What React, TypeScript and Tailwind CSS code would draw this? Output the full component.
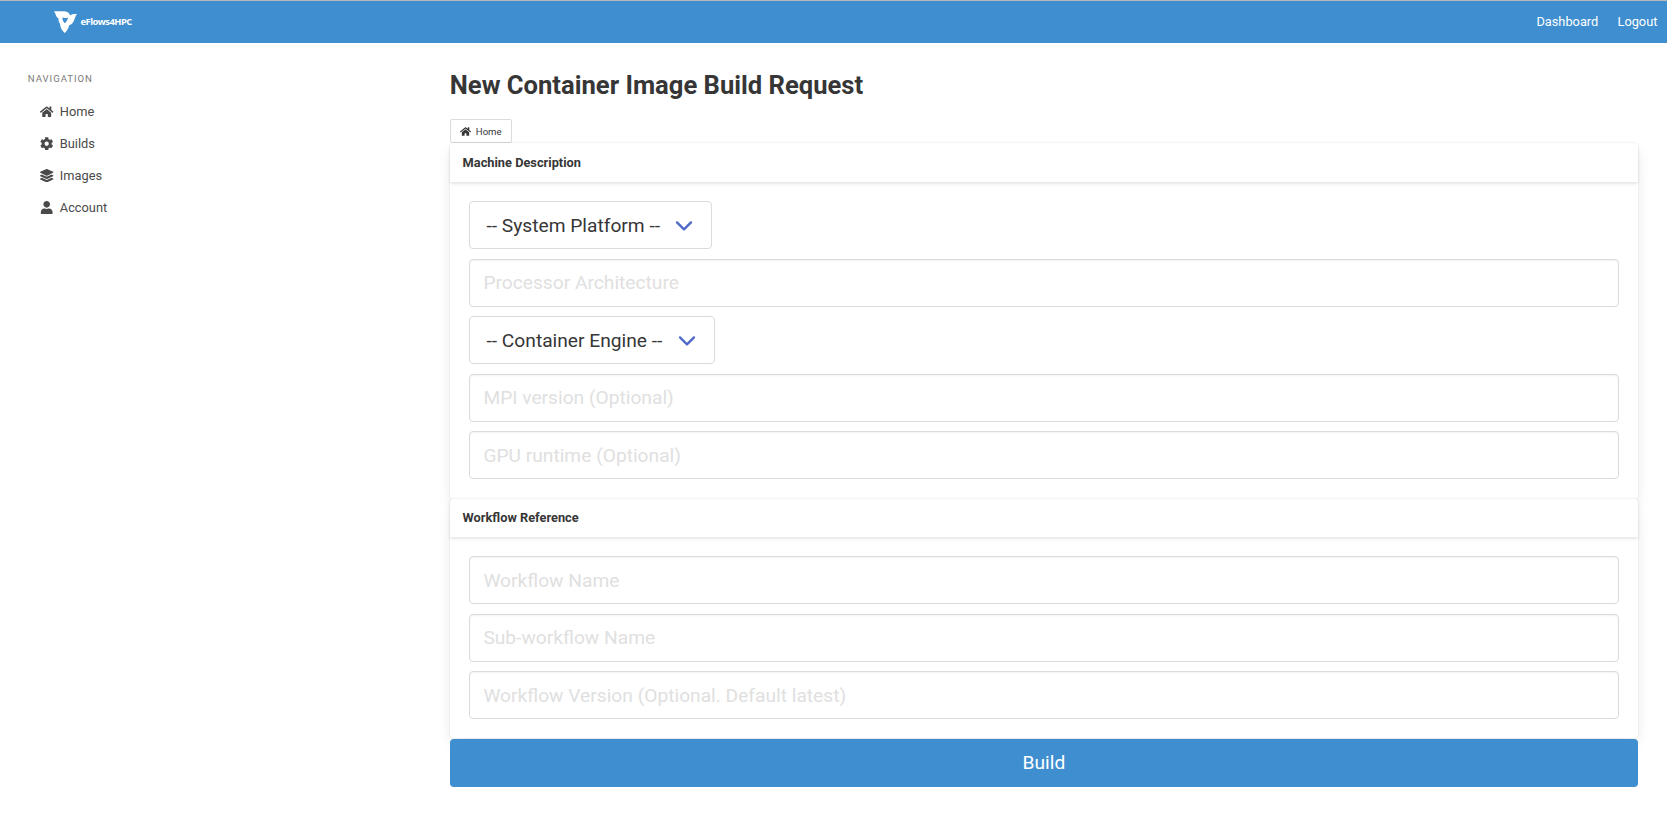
import { FaCog, FaHome, FaLayerGroup, FaUser } from "react-icons/fa";
import type { IconType } from "react-icons";

const menu: { label: string; Icon: IconType }[] = [
  { label: "Home", Icon: FaHome },
  { label: "Builds", Icon: FaCog },
  { label: "Images", Icon: FaLayerGroup },
  { label: "Account", Icon: FaUser },
];

function Logo() {
  return (
    <a href="#" className="flex items-center">
      <svg className="h-[22px] w-6 fill-white" viewBox="0 0 24 22">
        <path
          fillRule="evenodd"
          d="M0 .2H9.6C12.8 .2 15.2 1.6 16.2 4.4C18 2.8 20 2.8 23.2 3C22 4 21.6 5.4 20.8 7.4C19.4 11.4 17.8 13.6 15.2 14.2C14.6 17.2 12.8 20 10.7 22C8 19.6 6.2 17 6 12.8C4.8 11 4.2 9.4 4.6 7.6C2 6.4 1.8 2.4 0 .2ZM8.4 6.6C8.2 8.6 9 10.6 10.8 12.2C11.8 11.6 13.4 9 14.2 6.4C12.4 7.2 10.4 7.2 8.4 6.6Z"
        />
      </svg>
      <span className="ml-[2.5px] font-['Open_Sans',sans-serif] text-[9.4px] leading-3 font-bold tracking-[-0.52px] text-white">
        eFlows4HPC
      </span>
    </a>
  );
}

function TextField({ placeholder }: { placeholder: string }) {
  return (
    <input
      type="text"
      placeholder={placeholder}
      className="block h-12 w-full rounded border border-[#dbdbdb] px-[13.4px] text-[19.2px] leading-[28.8px] text-[#363636] shadow-[inset_0_1px_2px_rgba(10,10,10,0.05)] outline-none placeholder:text-[#e0e0e0]"
    />
  );
}

function Select({ label, width }: { label: string; width: string }) {
  return (
    <button
      type="button"
      className={`flex h-12 items-center justify-between rounded border border-[#dbdbdb] bg-white pt-[2.4px] pr-[17.4px] pl-[16.5px] text-[19.2px] leading-[28.8px] text-[#363636] ${width}`}
    >
      {label}
      <svg className="h-3 w-[18px]" viewBox="0 0 18 12" fill="none">
        <path d="M2 2.4L9 9.4L16 2.4" stroke="#5068ca" strokeWidth="2.3" strokeLinecap="round" strokeLinejoin="round" />
      </svg>
    </button>
  );
}

function Card({ title, children }: { title: string; children: React.ReactNode }) {
  return (
    <section className="rounded bg-white shadow-[0_6.4px_12.8px_-1.6px_rgba(10,10,10,0.1),0_0_0_1px_rgba(10,10,10,0.02)]">
      <header className="rounded-t px-[12.8px] py-[9.6px] text-[12.8px] leading-[19.2px] font-bold text-[#363636] shadow-[0_1.3px_3.2px_rgba(10,10,10,0.1)]">
        {title}
      </header>
      <div className="flex flex-col gap-[9.6px] p-[19.2px]">{children}</div>
    </section>
  );
}

export default function App() {
  return (
    <div className="h-[818px] overflow-hidden bg-white font-[Roboto,sans-serif] text-[12.8px] leading-[19.2px] text-[#4a4a4a]">
      <nav className="flex h-[43px] items-center justify-between border-t border-[#b8b8b8] bg-[#3e8ed0] pr-[9.6px] pl-[54px]">
        <Logo />
        <div className="flex gap-[19.2px] text-white">
          <a href="#">Dashboard</a>
          <a href="#">Logout</a>
        </div>
      </nav>

      <div className="flex items-start">
        <aside className="w-[449.8px] shrink-0 pt-[29px] pl-[27.8px]">
          <p className="mb-[9px] text-[9.6px] leading-[14.4px] tracking-[0.96px] text-[#7a7a7a] uppercase">
            Navigation
          </p>
          <ul>
            {menu.map(({ label, Icon }) => (
              <li key={label}>
                <a href="#" className="flex h-8 items-center px-[9.6px]">
                  <span className="mr-[2.8px] flex w-[19.6px] justify-end pr-[3.4px]">
                    <Icon className="size-[13.4px]" />
                  </span>
                  {label}
                </a>
              </li>
            ))}
          </ul>
        </aside>

        <main className="w-[1188.2px] pt-[28.2px]">
          <h1 className="mb-[19.4px] text-[25.6px] leading-[28.8px] font-bold text-[#363636]">
            New Container Image Build Request
          </h1>
          <a
            href="#"
            className="flex h-6 w-[62px] items-center rounded-[2px] border border-[#dbdbdb] pl-[9.4px] text-[9.6px] text-[#363636]"
          >
            <FaHome className="mr-[4.6px] size-[11px]" />
            Home
          </a>
          <Card title="Machine Description">
            <Select label="-- System Platform --" width="w-[242.8px]" />
            <TextField placeholder="Processor Architecture" />
            <Select label="-- Container Engine --" width="w-[245.6px]" />
            <TextField placeholder="MPI version (Optional)" />
            <TextField placeholder="GPU runtime (Optional)" />
          </Card>
          <Card title="Workflow Reference">
            <TextField placeholder="Workflow Name" />
            <TextField placeholder="Sub-workflow Name" />
            <TextField placeholder="Workflow Version (Optional. Default latest)" />
          </Card>
          <button
            type="button"
            className="relative mt-[0.4px] block h-12 w-full rounded bg-[#3e8ed0] pt-[1.6px] text-[19.2px] leading-[28.8px] text-white"
          >
            Build
          </button>
        </main>
      </div>
    </div>
  );
}
